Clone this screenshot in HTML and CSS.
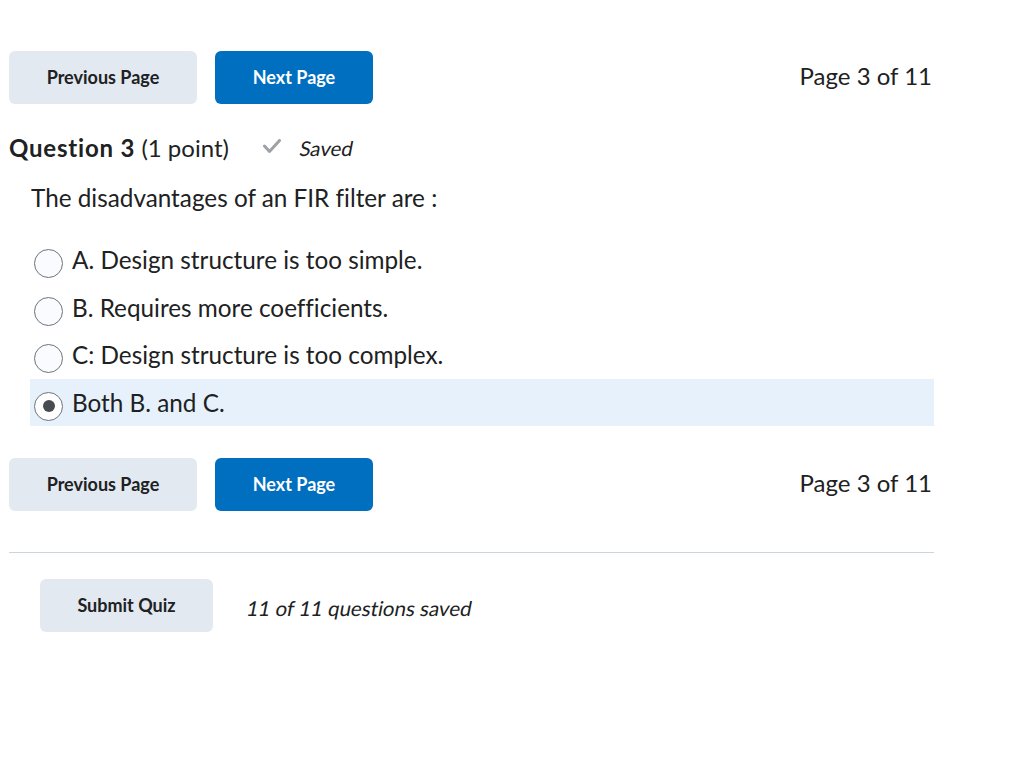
FILE: index.html
```html
<!DOCTYPE html>
<html lang="en">
<head>
<meta charset="utf-8">
<title>Quiz - Page 3 of 11</title>
<link rel="stylesheet" href="styles.css">
</head>
<body>
<main class="page">
  <div class="nav-row">
    <button class="btn btn-secondary">Previous Page</button>
    <button class="btn btn-primary">Next Page</button>
    <span class="page-label">Page 3 of 11</span>
  </div>

  <div class="question-head">
    <h2 class="q-title"><strong>Question 3</strong> (1 point)</h2>
    <span class="saved">
      <svg class="check" width="18" height="15" viewBox="0 0 18 15" aria-hidden="true">
        <polyline points="1.5,7 6.5,12.5 16.5,1.5" fill="none" stroke="#9da2a6" stroke-width="3" stroke-linecap="round" stroke-linejoin="round"/>
      </svg>
      <span class="slant">Saved</span>
    </span>
  </div>

  <p class="q-text">The disadvantages of an FIR filter are :</p>

  <ul class="options">
    <li class="option"><span class="radio"></span><span class="opt-text">A. Design structure is too simple.</span></li>
    <li class="option"><span class="radio"></span><span class="opt-text">B. Requires more coefficients.</span></li>
    <li class="option"><span class="radio"></span><span class="opt-text">C: Design structure is too complex.</span></li>
    <li class="option selected"><span class="radio checked"></span><span class="opt-text">Both B. and C.</span></li>
  </ul>

  <div class="nav-row nav-bottom">
    <button class="btn btn-secondary">Previous Page</button>
    <button class="btn btn-primary">Next Page</button>
    <span class="page-label">Page 3 of 11</span>
  </div>

  <hr class="divider">

  <div class="submit-row">
    <button class="btn btn-secondary btn-submit">Submit Quiz</button>
    <span class="saved-count slant">11 of 11 questions saved</span>
  </div>
</main>
</body>
</html>
```

FILE: styles.css
```css
* { box-sizing: border-box; }

body {
  margin: 0;
  background: #ffffff;
  color: #202122;
  font-family: Lato, "Noto Sans", "Liberation Sans", sans-serif;
  font-variant-ligatures: none;
}

.page {
  width: 934px;
  padding: 51px 0 0 9px;
}

.nav-row {
  display: flex;
  align-items: center;
  gap: 18px;
}

.btn {
  font-family: Lato, "Noto Sans", "Liberation Sans", sans-serif;
  font-variant-ligatures: none;
  font-weight: 700;
  font-size: 18px;
  line-height: 25px;
  height: 53px;
  padding: 0;
  border: none;
  border-radius: 6px;
  cursor: pointer;
}

.btn-secondary {
  background: #e3e9f1;
  color: #202122;
}

.btn-primary {
  background: #006fbf;
  color: #ffffff;
}

.nav-row .btn-secondary { width: 188px; }
.nav-row .btn-primary { width: 158px; }

.page-label {
  margin-left: auto;
  margin-right: 2px;
  margin-bottom: 5px;
  font-size: 24px;
  line-height: 29px;
}

.question-head {
  display: flex;
  align-items: center;
  margin-top: 29px;
  height: 29px;
}

.q-title {
  margin: 0;
  font-size: 24px;
  line-height: 29px;
  font-weight: 400;
}

.q-title strong {
  font-weight: 700;
  letter-spacing: 0.8px;
}

.saved {
  display: flex;
  align-items: center;
  margin-left: 34px;
  font-size: 20.4px;
  color: #202122;
}

.slant {
  display: inline-block;
  font-style: normal;
  transform: skewX(-11deg);
}

.check { margin-right: 19px; margin-top: -2px; }

.q-text {
  margin: 21px 0 0 22px;
  font-size: 24.3px;
  line-height: 29px;
}

.options {
  list-style: none;
  margin: 24px 0 0 21px;
  padding: 0;
}

.option {
  display: flex;
  align-items: flex-start;
  height: 47.5px;
  padding: 9px 0 0 4px;
}

.option.selected { background: #e6f1fb; }

.radio {
  flex: none;
  width: 29px;
  height: 29px;
  margin-top: 4px;
  margin-right: 9px;
  border: 1px solid #6e7477;
  border-radius: 50%;
  background: #f9fbff;
  display: flex;
  align-items: center;
  justify-content: center;
}

.radio.checked { background: #ffffff; }

.radio.checked::after {
  content: "";
  width: 12px;
  height: 12px;
  border-radius: 50%;
  background: #494c4e;
}

.opt-text {
  font-size: 24.3px;
  line-height: 29px;
}

.nav-bottom { margin-top: 32px; }

.divider {
  margin: 41px 0 0 0;
  border: none;
  border-top: 1px solid #cdd5dc;
  height: 0;
}

.submit-row {
  display: flex;
  align-items: center;
  margin: 26px 0 0 31px;
}

.btn-submit { width: 173px; }

.saved-count {
  margin-left: 34px;
  margin-top: 4px;
  font-size: 20.5px;
}
```
